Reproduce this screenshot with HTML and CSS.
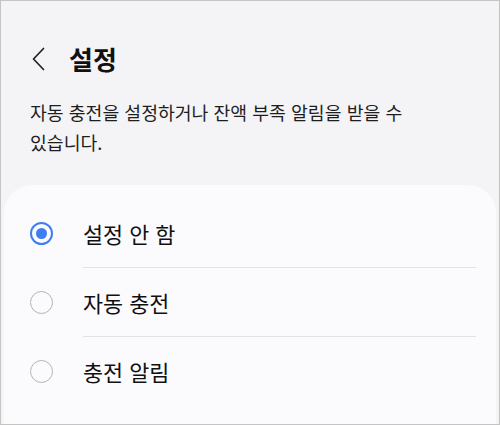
FILE: index.html
```html
<!DOCTYPE html>
<html lang="ko">
<head>
<meta charset="utf-8">
<title>설정</title>
<link rel="stylesheet" href="styles.css">
</head>
<body>
<div class="screen">
  <header class="topbar">
    <button class="back" aria-label="뒤로">
      <svg width="13" height="24" viewBox="0 0 13 24" aria-hidden="true">
        <path d="M11.5 1.5 L1.5 12 L11.5 22.5" fill="none" stroke="#222" stroke-width="1.7" stroke-linecap="round" stroke-linejoin="round"/>
      </svg>
    </button>
    <h1 class="title">설정</h1>
  </header>
  <p class="desc">자동 충전을 설정하거나 잔액 부족 알림을 받을 수 있습니다.</p>
  <section class="card">
    <ul class="options">
      <li class="option">
        <span class="radio on"></span>
        <span class="content">설정 안 함</span>
      </li>
      <li class="option">
        <span class="radio"></span>
        <span class="content">자동 충전</span>
      </li>
      <li class="option">
        <span class="radio"></span>
        <span class="content">충전 알림</span>
      </li>
    </ul>
  </section>
</div>
</body>
</html>
```

FILE: styles.css
```css
* { box-sizing: border-box; }

html, body {
  margin: 0;
  padding: 0;
}

body {
  font-family: "Noto Sans CJK KR", "Noto Sans", sans-serif;
  background: #f4f4f6;
}

.screen {
  width: 500px;
  height: 425px;
  border: 1px solid #c4c4c4;
  background: #f4f4f6;
  display: flex;
  flex-direction: column;
  overflow: hidden;
}

.topbar {
  display: flex;
  align-items: center;
  height: 56px;
  margin-top: 30px;
  padding-left: 31px;
}

.back {
  border: 0;
  background: none;
  padding: 0;
  width: 13px;
  height: 24px;
  display: flex;
  margin-right: 24px;
}

.title {
  margin: 0;
  font-size: 26px;
  font-weight: 700;
  color: #111;
  line-height: 1;
}

.desc {
  margin: 10px 40px 0 29px;
  font-size: 18.3px;
  line-height: 30px;
  color: #1e1e1e;
  word-break: keep-all;
}

.card {
  flex: 1;
  margin: 28px 3px 0 3px;
  background: #fbfbfd;
  border-radius: 28px 28px 0 0;
  padding-top: 14px;
}

.options {
  list-style: none;
  margin: 0;
  padding: 0;
}

.option {
  height: 69px;
  display: flex;
  align-items: center;
  padding-left: 26px;
}

.radio {
  width: 23px;
  height: 23px;
  border-radius: 50%;
  border: 1.5px solid #b4b4b4;
  flex: none;
  display: flex;
  align-items: center;
  justify-content: center;
  margin-right: 30px;
}

.radio.on {
  border: 2.5px solid #3d7ef3;
}

.radio.on::after {
  content: "";
  width: 11px;
  height: 11px;
  border-radius: 50%;
  background: #3d7ef3;
}

.content {
  flex: 1;
  align-self: stretch;
  display: flex;
  align-items: center;
  margin-right: 20px;
  font-size: 21.8px;
  color: #111;
}

.option:not(:last-child) .content {
  border-bottom: 1px solid #e2e2e4;
}
```
